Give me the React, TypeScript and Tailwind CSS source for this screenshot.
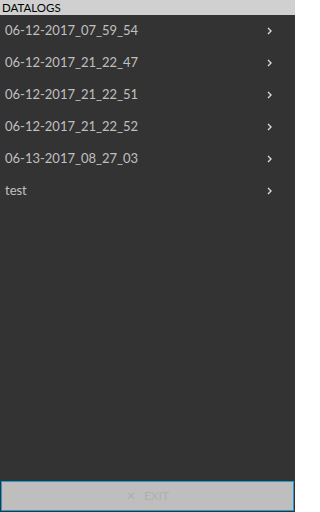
import React from "react";

const items = [
  "06-12-2017_07_59_54",
  "06-12-2017_21_22_47",
  "06-12-2017_21_22_51",
  "06-12-2017_21_22_52",
  "06-13-2017_08_27_03",
  "test",
];

export default function App() {
  return (
    <div className="w-[295px] h-[512px] bg-[#333333] flex flex-col font-['Lato',sans-serif] overflow-hidden">
      <div className="h-[15px] bg-[#d0d0d0] text-black text-[11.5px] leading-[15px] pl-[2px]">DATALOGS</div>
      <div className="flex-1 flex flex-col">
        {items.map((t) => (
          <div key={t} className="h-[32px] flex items-center justify-between pl-[5px] pr-[22px] text-[#c0c0c0] text-[13px]">
            <span>{t}</span>
            <svg width="6" height="8" viewBox="0 0 6 8" className="block">
              <path d="M1 1 L4 4 L1 7" stroke="#d8d8d8" strokeWidth="1.4" fill="none" />
            </svg>
          </div>
        ))}
      </div>
      <div className="h-[31px] pb-[1px] px-[1px]">
        <button className="w-full h-[30px] bg-[#bebebe] border border-[#1a9ed6] flex items-center justify-center gap-[8px] text-[#afafaf] text-[12px]">
          <span>✕</span>
          <span>EXIT</span>
        </button>
      </div>
    </div>
  );
}
